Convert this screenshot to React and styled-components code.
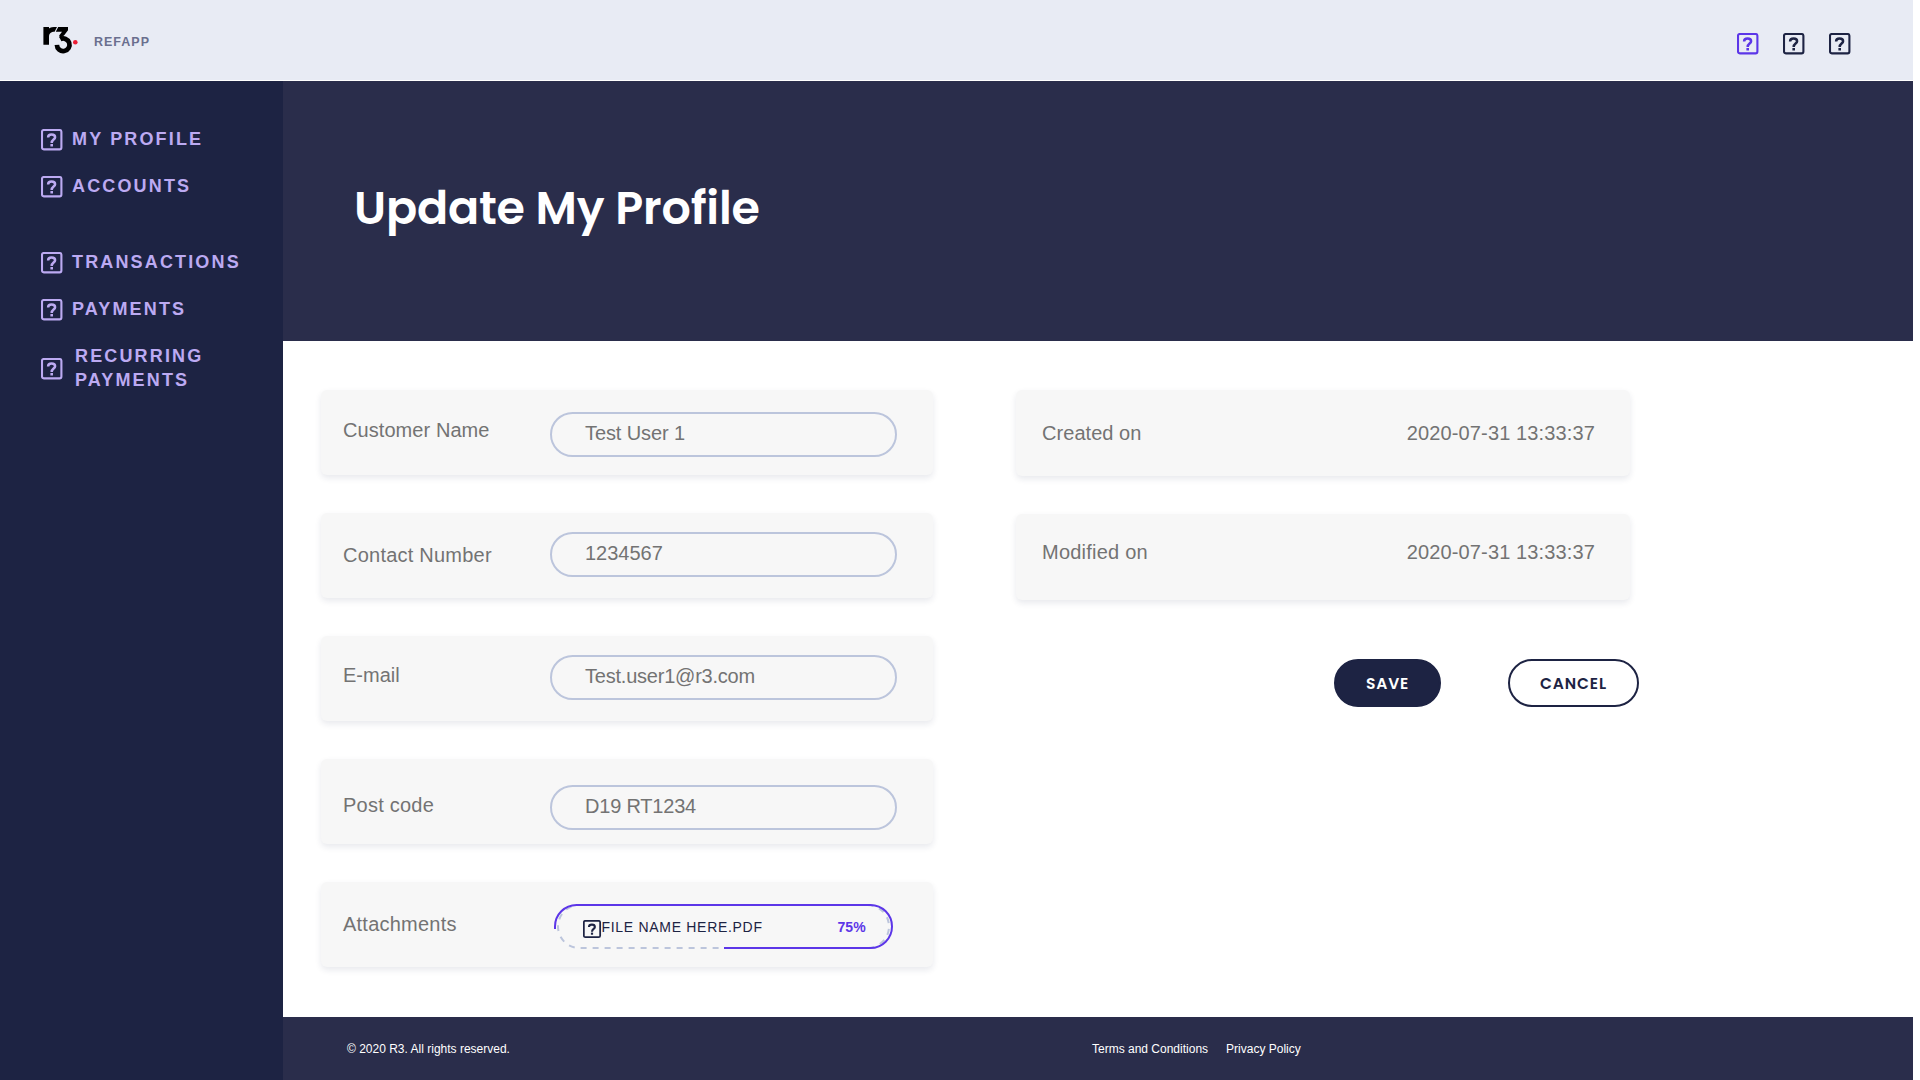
import React from "react";
import styled, { createGlobalStyle } from "styled-components";

const SANS = '"Liberation Sans", Arial, Helvetica, sans-serif';
const DISPLAY = 'Poppins, Inter, "Liberation Sans", sans-serif';

const Global = createGlobalStyle`
  *, *::before, *::after { box-sizing: border-box; }
  html, body { margin: 0; padding: 0; background: #fff; }
  body { font-family: ${SANS}; overflow: hidden; }
  h1, p { margin: 0; }
`;

const Page = styled.div`
  display: flex;
  flex-direction: column;
  width: 1913px;
  height: 1080px;
`;

const Header = styled.header`
  display: flex;
  align-items: flex-start;
  flex: 0 0 80px;
  margin-bottom: 1px;
  padding: 0 62px 0 43px;
  background: #e8ebf4;
`;

const LogoMark = styled.svg`
  display: block;
  margin-top: 26px;
`;

const AppName = styled.span`
  margin: 34px auto 0 15px;
  font-size: 12.5px;
  line-height: 17px;
  font-weight: 700;
  letter-spacing: 1px;
  color: #6a6f8e;
`;

const HeaderActions = styled.div`
  display: flex;
  gap: 24px;
  padding-top: 33px;
`;

const Body = styled.div`
  display: flex;
  flex: 1;
  min-height: 0;
`;

const Sidebar = styled.nav`
  display: flex;
  flex-direction: column;
  flex: 0 0 283px;
  padding: 46px 0 0 41px;
  background: #1d2343;
`;

const NavItem = styled.a`
  display: flex;
  align-items: center;
  gap: ${(p) => (p.$wide ? 12 : 9)}px;
  margin-bottom: ${(p) => (p.$last ? 29 : 0)}px;
  padding-bottom: 23px;
  font-size: 18px;
  line-height: 24px;
  font-weight: 700;
  letter-spacing: 2.15px;
  color: #bcaaf2;
  svg { position: relative; top: 1px; }
`;

const Main = styled.main`
  display: flex;
  flex-direction: column;
  flex: 1;
`;

const Banner = styled.section`
  flex: 0 0 260px;
  padding: 97px 0 0 71px;
  background: #2a2d4b;
`;

const Title = styled.h1`
  font-family: ${DISPLAY};
  font-size: 46px;
  line-height: 60px;
  font-weight: 600;
  letter-spacing: -0.17px;
  color: #fff;
`;

const Content = styled.section`
  display: flex;
  align-items: flex-start;
  gap: 83px;
  flex: 1;
  padding: 49px 0 0 38px;
`;

const Column = styled.div`
  display: flex;
  flex-direction: column;
  gap: 38px;
  width: ${(p) => p.$width}px;
`;

const Card = styled.div`
  display: flex;
  align-items: flex-start;
  height: ${(p) => p.$height}px;
  padding: 0 ${(p) => p.$right}px 0 ${(p) => p.$left}px;
  border-radius: 6px;
  background: #f7f7f7;
  box-shadow: 0 3px 6px rgba(30, 40, 80, 0.1);
`;

const Label = styled.label`
  flex: 1;
  padding-top: ${(p) => p.$top}px;
  font-size: 20px;
  line-height: 24px;
  letter-spacing: ${(p) => p.$track ?? 0.23}px;
  color: #737373;
`;

const Stamp = styled.time`
  padding-top: ${(p) => p.$top}px;
  font-size: 20px;
  line-height: 24px;
  letter-spacing: 0.13px;
  color: #737373;
`;

const Field = styled.div`
  width: 347px;
  height: 45px;
  margin-top: ${(p) => p.$top}px;
  padding: 7px 0 0 33px;
  border: 2px solid #bcc5dc;
  border-radius: 23px;
  font-size: 20px;
  line-height: 24px;
  letter-spacing: ${(p) => p.$track}px;
  color: #737373;
`;

const Upload = styled.div`
  position: relative;
  display: flex;
  align-items: flex-start;
  width: 339px;
  height: 45px;
  margin: 22px 4px 0 0;
  padding: 0 27px 0 29px;
`;

const UploadTrack = styled.svg`
  position: absolute;
  inset: 0;
  overflow: visible;
`;

const UploadIcon = styled.span`
  display: flex;
  margin-top: 16px;
`;

const FileName = styled.span`
  flex: 1;
  padding-top: 15px;
  font-size: 14px;
  line-height: 16px;
  letter-spacing: 0.7px;
  color: #1d2343;
`;

const Percent = styled.span`
  padding-top: 15px;
  font-size: 14px;
  line-height: 16px;
  font-weight: 700;
  letter-spacing: 0.2px;
  color: #5c36e8;
`;

const Actions = styled.div`
  display: flex;
  justify-content: flex-end;
  gap: 67px;
  margin: 21px -9px 0 0;
`;

const Button = styled.button`
  width: ${(p) => p.$width}px;
  height: 48px;
  padding: 1px 0 0;
  border: 2px solid #1d2343;
  border-radius: 24px;
  background: ${(p) => (p.$primary ? "#1d2343" : "#fff")};
  color: ${(p) => (p.$primary ? "#fff" : "#1d2343")};
  font-family: ${DISPLAY};
  font-size: 15.5px;
  line-height: 24px;
  font-weight: 600;
  letter-spacing: 0.85px;
`;

const Footer = styled.footer`
  display: flex;
  flex: 0 0 63px;
  padding: 25px 0 0 64px;
  background: #2a2d4b;
  font-size: 12px;
  line-height: 14px;
  color: #fff;
`;

const Copyright = styled.p`
  width: 745px;
`;

const FooterLinks = styled.div`
  display: flex;
  gap: 18px;
`;

function HelpBox({ size = 22, color }) {
  return (
    <svg width={size} height={size} viewBox="0 0 22 22" fill="none" stroke={color}>
      <rect x="1" y="1" width="19.4" height="19.4" rx="1.8" strokeWidth="2.1" />
      <path
        d="M7.1 8.4C7.1 6.5 8.5 5.5 10.6 5.5C12.8 5.5 14.1 6.5 14.1 8.3C14.1 10.7 10.7 10.6 10.7 13.9"
        strokeWidth="2.5"
      />
      <rect x="9.4" y="15" width="2.6" height="2.5" fill={color} stroke="none" />
    </svg>
  );
}

function Logo() {
  return (
    <LogoMark width="36" height="30" viewBox="0 0 36 30">
      <path d="M.4 1H6V2.6C7.4 1.4 9.4 1 14 1L11.6 5.8C8 5.8 6 7.4 6 11V18.7H.4Z" fill="#000" />
      <path d="M15.2 1H25V4.3L21.2 9.2L17 12.4L16.2 9.4L19 5.8H12.8Z" fill="#000" />
      <path d="M13.9 18.9A6.3 6.3 0 1 0 17.3 13.2" fill="none" stroke="#000" strokeWidth="4.7" />
      <circle cx="32.3" cy="16.3" r="2.3" fill="#ec1d34" />
    </LogoMark>
  );
}

const NAV = [
  { text: "MY PROFILE" },
  { text: "ACCOUNTS", last: true },
  { text: "TRANSACTIONS" },
  { text: "PAYMENTS" },
  { text: ["RECURRING", <br key="br" />, "PAYMENTS"], wide: true },
];

const FIELDS = [
  { label: "Customer Name", value: "Test User 1", labelTop: 28, fieldTop: 22, labelTrack: 0.07, track: -0.1 },
  { label: "Contact Number", value: "1234567", labelTop: 30, fieldTop: 19, track: 0 },
  { label: "E-mail", value: "Test.user1@r3.com", labelTop: 27, fieldTop: 19, labelTrack: 0, track: -0.22 },
  { label: "Post code", value: "D19 RT1234", labelTop: 34, fieldTop: 26, track: -0.2 },
];

const STAMPS = [
  { label: "Created on", value: "2020-07-31 13:33:37", top: 31, labelTrack: 0.05 },
  { label: "Modified on", value: "2020-07-31 13:33:37", top: 26 },
];

export default function App() {
  return (
    <>
      <Global />
      <Page>
        <Header>
          <Logo />
          <AppName>REFAPP</AppName>
          <HeaderActions>
            <HelpBox color="#5c36e8" />
            <HelpBox color="#1d2343" />
            <HelpBox color="#1d2343" />
          </HeaderActions>
        </Header>
        <Body>
          <Sidebar>
            {NAV.map((item, i) => (
              <NavItem key={i} $last={item.last} $wide={item.wide}>
                <HelpBox color="#bcaaf2" />
                <span>{item.text}</span>
              </NavItem>
            ))}
          </Sidebar>
          <Main>
            <Banner>
              <Title>Update My Profile</Title>
            </Banner>
            <Content>
              <Column $width={612}>
                {FIELDS.map((f) => (
                  <Card key={f.label} $height={85} $left={22} $right={36}>
                    <Label $top={f.labelTop} $track={f.labelTrack}>{f.label}</Label>
                    <Field $top={f.fieldTop} $track={f.track}>{f.value}</Field>
                  </Card>
                ))}
                <Card $height={85} $left={22} $right={36}>
                  <Label $top={30}>Attachments</Label>
                  <Upload>
                    <UploadTrack width="339" height="45" fill="none" strokeWidth="2">
                      <rect x="4" y="1" width="331" height="43" rx="21.5" stroke="#bcc5dc" strokeDasharray="6 6" />
                      <path
                        d="M1 25V22.5A21.5 21.5 0 0 1 22.5 1H316.5A21.5 21.5 0 0 1 316.5 44H170"
                        stroke="#5c36e8"
                      />
                    </UploadTrack>
                    <UploadIcon>
                      <HelpBox size={18.5} color="#1d2343" />
                    </UploadIcon>
                    <FileName>FILE NAME HERE.PDF</FileName>
                    <Percent>75%</Percent>
                  </Upload>
                </Card>
              </Column>
              <Column $width={614}>
                {STAMPS.map((s) => (
                  <Card key={s.label} $height={86} $left={26} $right={35}>
                    <Label $top={s.top} $track={s.labelTrack}>{s.label}</Label>
                    <Stamp $top={s.top}>{s.value}</Stamp>
                  </Card>
                ))}
                <Actions>
                  <Button $primary $width={107}>SAVE</Button>
                  <Button $width={131}>CANCEL</Button>
                </Actions>
              </Column>
            </Content>
            <Footer>
              <Copyright>© 2020 R3. All rights reserved.</Copyright>
              <FooterLinks>
                <span>Terms and Conditions</span>
                <span>Privacy Policy</span>
              </FooterLinks>
            </Footer>
          </Main>
        </Body>
      </Page>
    </>
  );
}
